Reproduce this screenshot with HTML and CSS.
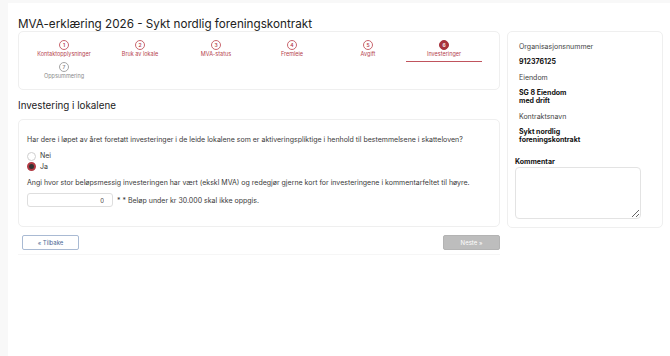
FILE: index.html
```html
<html>
<head>
<meta charset="utf-8">
<link rel="stylesheet" href="styles.css">
</head>
<body>
<div class="page">
  <h1 class="title">MVA-erklæring 2026 - Sykt nordlig foreningskontrakt</h1>
  <div class="layout">
    <div class="main">
      <div class="card stepper">
        <div class="step"><span class="dot">1</span><span class="step-label">Kontaktopplysninger</span></div>
        <div class="step"><span class="dot">2</span><span class="step-label">Bruk av lokale</span></div>
        <div class="step"><span class="dot">3</span><span class="step-label">MVA-status</span></div>
        <div class="step"><span class="dot">4</span><span class="step-label">Fremleie</span></div>
        <div class="step"><span class="dot">5</span><span class="step-label">Avgift</span></div>
        <div class="step active"><span class="dot">6</span><span class="step-label">Investeringer</span></div>
        <div class="step todo"><span class="dot">7</span><span class="step-label">Oppsummering</span></div>
      </div>

      <h2 class="section-title">Investering i lokalene</h2>

      <div class="card question">
        <p class="q-text">Har dere i løpet av året foretatt investeringer i de leide lokalene som er aktiveringspliktige i henhold til bestemmelsene i skatteloven?</p>
        <div class="radios">
          <label class="radio-row"><input type="radio" name="inv"> Nei</label>
          <label class="radio-row"><input type="radio" name="inv" checked> Ja</label>
        </div>
        <p class="q-text amount-text">Angi hvor stor beløpsmessig investeringen har vært (ekskl MVA) og redegjør gjerne kort for investeringene i kommentarfeltet til høyre.</p>
        <div class="amount-row">
          <input class="amount" type="text" value="0">
          <span class="hint">* * Beløp under kr 30.000 skal ikke oppgis.</span>
        </div>
      </div>

      <div class="nav">
        <button class="btn back">&laquo; Tilbake</button>
        <button class="btn next" disabled>Neste &raquo;</button>
      </div>
    </div>

    <div class="card side">
      <div class="info">
        <div class="info-label">Organisasjonsnummer</div>
        <div class="info-value">912376125</div>
        <div class="info-label">Eiendom</div>
        <div class="info-value">SG 8 Eiendom<br>med drift</div>
        <div class="info-label">Kontraktsnavn</div>
        <div class="info-value">Sykt nordlig<br>foreningskontrakt</div>
      </div>
      <div class="comment">
        <div class="comment-label">Kommentar</div>
        <textarea class="comment-box"></textarea>
      </div>
    </div>
  </div>
</div>
</body>
</html>
```

FILE: styles.css
```css
html, body {
  margin: 0;
  height: 100%;
}

body {
  background-color: #f8f8f8;
  font-family: Inter, "Noto Sans", sans-serif;
  color: #3a3a3a;
}

.page {
  background-color: white;
  margin-left: 8px;
  margin-top: 3px;
  min-height: 353px;
  padding: 14px 7px 0 10px;
  box-sizing: border-box;
}

.title {
  font-size: 11.7px;
  font-weight: 400;
  line-height: 14px;
  margin: 0;
  color: #222;
}

.layout {
  display: flex;
  gap: 7px;
  align-items: flex-start;
}

.main {
  width: 482px;
}

.card {
  border: 1px solid #efefef;
  border-radius: 5px;
  background: white;
}

/* stepper */
.stepper {
  display: grid;
  grid-template-columns: repeat(6, 76px);
  padding: 8px 0 6px 7px;
  height: 59px;
  box-sizing: border-box;
}

.step {
  display: flex;
  flex-direction: column;
  align-items: center;
  color: #b5434d;
  padding-bottom: 2px;
  border-bottom: 1.5px solid transparent;
}

.dot {
  width: 8px;
  height: 8px;
  border: 1px solid #c9666e;
  border-radius: 50%;
  font-size: 5px;
  line-height: 8px;
  text-align: center;
  font-weight: 600;
}

.step-label {
  font-size: 5.5px;
  line-height: 8px;
}

.step.active {
  border-bottom-color: #c0545d;
}

.step.active .dot {
  background-color: #a8323c;
  border-color: #a8323c;
  color: white;
}

.step.todo {
  color: #8a8a8a;
}

.step.todo .dot {
  border-color: #a5a5a5;
}

.section-title {
  font-size: 9.8px;
  font-weight: 400;
  line-height: 14px;
  margin: 9px 0 6px 0;
  color: #222;
}

/* question */
.question {
  padding: 15px 8px 17px 8px;
  height: 108px;
  box-sizing: border-box;
}

.q-text {
  font-size: 7px;
  line-height: 9px;
  margin: 0;
}

.radios {
  margin-top: 7px;
  display: flex;
  flex-direction: column;
}

.radio-row {
  display: flex;
  align-items: center;
  gap: 4px;
  font-size: 7px;
  line-height: 10.5px;
  height: 10.5px;
}

.radio-row input {
  appearance: none;
  margin: 0;
  width: 9px;
  height: 9px;
  border: 1px solid #cfcfcf;
  border-radius: 50%;
  box-sizing: border-box;
  background: white;
}

.radio-row input:checked {
  border: 2px solid #b23a44;
  background: #333;
}

.amount-text {
  margin-top: 6px;
}

.amount-row {
  margin-top: 6px;
  display: flex;
  align-items: center;
  gap: 4px;
}

.amount {
  width: 86px;
  height: 14px;
  box-sizing: border-box;
  border: 1px solid #dedede;
  border-radius: 3px;
  font-family: inherit;
  font-size: 6px;
  text-align: right;
  padding: 0 8px;
  color: #444;
}

.hint {
  font-size: 7px;
}

/* nav buttons */
.nav {
  display: flex;
  justify-content: space-between;
  margin-top: 8px;
  padding: 0 0 4px 4px;
  border-bottom: 1px solid #f6f6f6;
}

.btn {
  width: 57px;
  height: 15px;
  border-radius: 2px;
  font-family: inherit;
  font-size: 6px;
  padding: 0;
}

.back {
  background: white;
  border: 1px solid #a9bad3;
  color: #4b6894;
}

.next {
  background: #bdbdbd;
  border: 1px solid #b3b3b3;
  color: white;
}

/* side card */
.side {
  width: 156px;
  height: 197px;
  box-sizing: border-box;
}

.info {
  padding: 10px 0 0 11px;
}

.info-label {
  font-size: 7px;
  line-height: 9px;
  color: #444;
}

.info-value {
  font-size: 7px;
  line-height: 8px;
  font-weight: 700;
  color: #111;
  margin: 7px 0 7px 0;
}

.comment {
  padding: 6px 0 0 7px;
}

.comment-label {
  font-size: 7px;
  line-height: 9px;
  font-weight: 700;
  color: #111;
}

.comment-box {
  display: block;
  margin-top: 1px;
  width: 126px;
  height: 52px;
  box-sizing: border-box;
  border: 1px solid #e3e3e3;
  border-radius: 4px;
}
```
